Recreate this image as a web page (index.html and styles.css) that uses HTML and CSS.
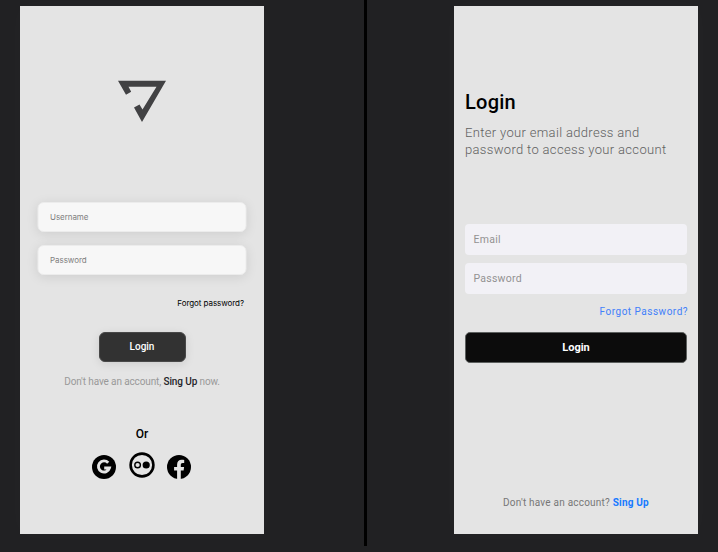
FILE: index.html
```html
<!DOCTYPE html>
<html lang="en">
<head>
<meta charset="utf-8">
<title>Login screens</title>
<link rel="stylesheet" href="styles.css">
</head>
<body>
<main class="board">
  <section class="phone phone-left">
    <svg class="logo" viewBox="0 0 48 42" aria-hidden="true"><path fill="#414143" d="M0 .7H48L24 42L16 27.5L21.5 24.5L24.5 29.5L38.5 6.7H10.5L13.2 11.7L8 14.8Z"/></svg>
    <div class="soft-field">Username</div>
    <div class="soft-field">Password</div>
    <a class="forgot-soft">Forgot password?</a>
    <button class="dark-button">Login</button>
    <p class="signup-soft">Don't have an account, <b>Sing Up</b> now.</p>
    <p class="or">Or</p>
    <div class="socials">
      <svg class="social" viewBox="0 0 24 24"><circle cx="12" cy="12" r="12"/><path fill="none" stroke="#e4e4e4" stroke-width="2.9" d="M16.2 7.7A5.6 5.6 0 1 0 17.4 13H12.2"/></svg>
      <svg class="social flickr" viewBox="0 0 26 26"><circle cx="13" cy="13" r="11.4" fill="none" stroke="#000" stroke-width="2.6"/><circle cx="8.6" cy="13" r="2.8" fill="none" stroke="#000" stroke-width="1.4"/><circle cx="17.2" cy="13" r="3.6"/></svg>
      <svg class="social" viewBox="0 0 24 24"><circle cx="12" cy="12" r="12"/><path fill="#e4e4e4" d="M10.1 24V15.5H7.1V12H10.1V9.4C10.1 6.4 11.9 4.7 14.6 4.7C15.9 4.7 17.2 4.9 17.2 4.9V7.9H15.7C14.3 7.9 13.8 8.8 13.8 9.7V12H17.1L16.6 15.5H13.8V24Z"/></svg>
    </div>
  </section>
  <div class="divider"></div>
  <section class="phone phone-right">
    <h1 class="title">Login</h1>
    <p class="subtitle">Enter your email address and<br>password to access your account</p>
    <div class="flat-field">Email</div>
    <div class="flat-field">Password</div>
    <a class="forgot-flat">Forgot Password?</a>
    <button class="black-button">Login</button>
    <p class="signup-flat">Don't have an account? <b>Sing Up</b></p>
  </section>
</main>
</body>
</html>
```
FILE: styles.css
```css
* { box-sizing: border-box; }
body { margin: 0; background: #212123; font-family: Roboto, "Liberation Sans", sans-serif; }
p, h1 { margin: 0; }
.board { display: flex; height: 552px; padding-left: 20px; overflow: hidden; }
.phone { display: flex; flex-direction: column; width: 244px; height: 528px; margin-top: 6px; background: #e4e4e4; box-shadow: 0 0 20px rgba(255, 255, 255, .025); white-space: nowrap; }
.divider { width: 3px; height: 546px; margin: 0 87px 0 100px; background: #000; }
.phone-left { align-items: center; padding-top: 74px; }
.logo { width: 48px; height: 42px; flex: none; margin-bottom: 80px; }
.soft-field { width: 209px; height: 30px; flex: none; margin: 0 0 13.4px 0; padding-left: 12px; border: 1px solid #ececec; border-radius: 6px; background: #f7f7f7; box-shadow: 0 2px 12px rgba(0, 0, 0, .1); color: #808080; font: 8px/28px Inter, sans-serif; letter-spacing: -.06px; transform: translateX(-.5px); }
.forgot-soft { align-self: flex-end; height: 12px; margin: 8px 20px 0 0; color: #000; font: 8px/12px Inter, sans-serif; letter-spacing: -.06px; }
.dark-button { width: 87px; height: 30px; flex: none; margin: 23.2px 0 0; padding: 0; border: 1px solid #484848; border-radius: 6px; background: #323232; box-shadow: 0 2px 10px rgba(0, 0, 0, .1); color: #fff; font: 500 10px/28px Roboto, sans-serif; }
.signup-soft { margin-top: 13px; color: #999; font-size: 10px; line-height: 14px; letter-spacing: -.12px; }
.signup-soft b { color: #242428; font-weight: 500; }
.or { margin-top: 37px; color: #000; font-size: 12px; font-weight: 500; line-height: 16px; }
.socials { display: flex; align-items: flex-start; gap: 12.7px; margin: 10.5px .5px 0 0; }
.social { width: 24px; height: 24px; margin-top: 3px; }
.flickr { width: 26px; height: 26px; margin-top: 0; }
.phone-right { padding: 82px 11px 0; }
.title { color: #000; font-size: 20px; font-weight: 500; line-height: 28px; letter-spacing: .25px; }
.subtitle { margin: 8px 0 66px; color: #606060; font-size: 13px; font-weight: 300; line-height: 17px; letter-spacing: .33px; }
.flat-field { height: 31px; flex: none; margin-bottom: 8px; padding-left: 8.5px; border-radius: 4px; background: #f2f1f6; color: #929292; font-size: 10.5px; line-height: 32px; letter-spacing: .25px; }
.forgot-flat { align-self: flex-end; margin: 2px -1px 0 0; color: #4180fa; font-size: 10px; line-height: 16px; letter-spacing: .5px; }
.black-button { width: 222px; height: 31px; flex: none; margin-top: 12px; padding: 0; border: 1px solid #5d605f; border-radius: 5px; background: #0c0c0c; color: #fff; font: 700 11px/29px Roboto, sans-serif; }
.signup-flat { margin-top: 132px; align-self: center; color: #777; font-size: 10px; line-height: 16px; letter-spacing: .21px; }
.signup-flat b { color: #177aff; font-weight: 700; }
```
